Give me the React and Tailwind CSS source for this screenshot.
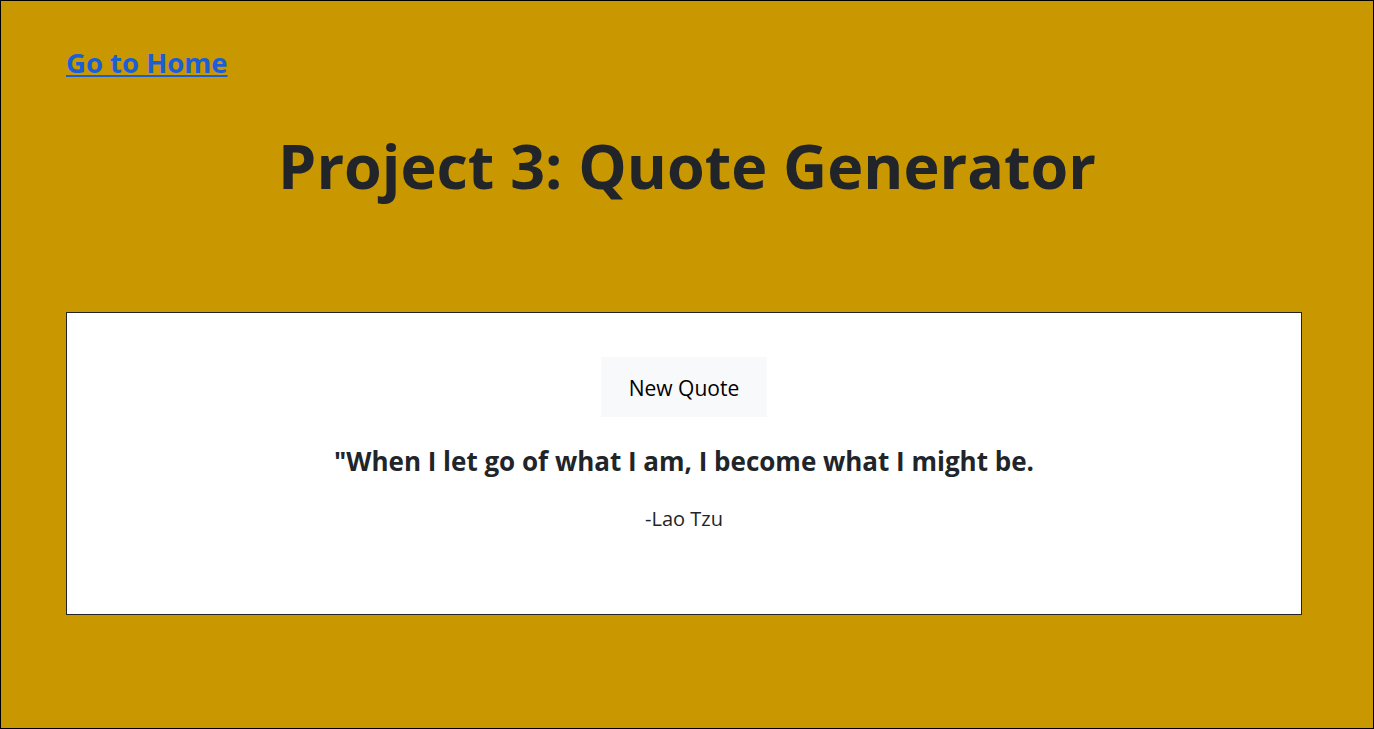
import React from "react";

const font = { fontFamily: '"Open Sans", "Noto Sans", sans-serif' };

export default function App() {
  return (
    <div
      style={font}
      className="h-[729px] w-[1374px] border border-black bg-[#c99700] text-[#212529]"
    >
      <div className="px-[65px] pt-[44px]">
        {/* Back link */}
        <a
          href="#"
          className="text-[27.5px] font-bold leading-[36px] text-[#1a5fd7] underline"
        >
          Go to Home
        </a>

        <h1 className="mt-[45px] text-center text-[61px] font-bold leading-[80px]">
          Project 3: Quote Generator
        </h1>

        {/* Quote card */}
        <div className="mt-[106px] flex h-[303px] w-[1236px] flex-col items-center border border-[#212529] bg-white pt-[44px]">
          <button className="h-[60px] w-[166px] bg-[#f8f9fa] pt-[4px] text-[21px] text-black">
            New Quote
          </button>
          <p className="mt-[26px] text-[26px] font-bold leading-[36px]">
            "When I let go of what I am, I become what I might be.
          </p>
          <p className="mt-[25px] text-[20px] leading-[30px]">-Lao Tzu</p>
        </div>
      </div>
    </div>
  );
}
